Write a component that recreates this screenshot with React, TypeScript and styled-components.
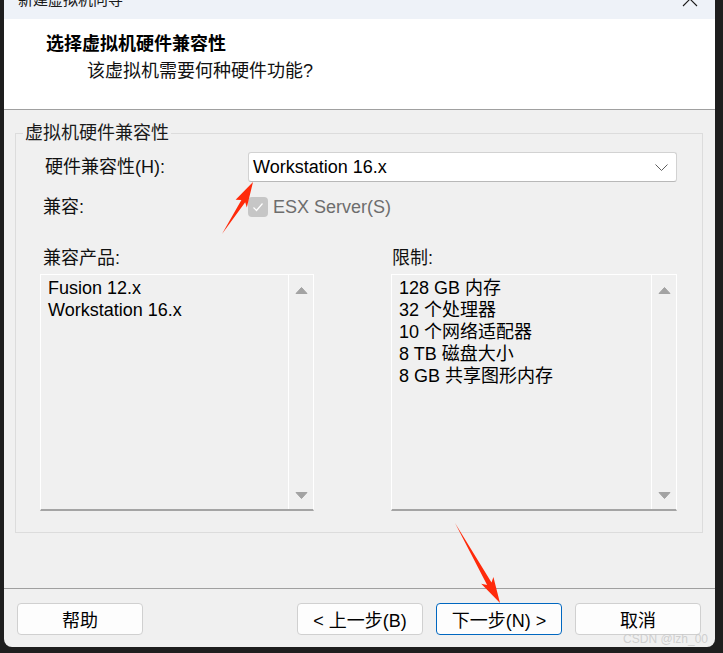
import React from 'react';
import styled, { createGlobalStyle } from 'styled-components';

const FONT = '"Liberation Sans", "Noto Sans CJK SC", sans-serif';

const GlobalStyle = createGlobalStyle`
html, body {
  margin: 0;
  padding: 0;
  background: #1e1e1e;
}
* {
  box-sizing: border-box;
}
`;

const Screen = styled.div`
position: relative;
width: 723px;
height: 653px;
padding-left: 4px;
background: #1e1e1e;
font-family: ${FONT};
overflow: hidden;
`;

const Window = styled.div`
width: 711px;
height: 647px;
display: flex;
flex-direction: column;
background: #f0f0f0;
border-radius: 0 0 8px 8px;
overflow: hidden;
`;

const TitleBar = styled.div`
height: 19px;
flex-shrink: 0;
display: flex;
align-items: flex-start;
justify-content: space-between;
padding: 0 17px 0 14px;
background: #eef2f8;
overflow: hidden;
`;

const TitleText = styled.div`
margin-top: -8px;
font-size: 15px;
line-height: 15px;
color: #1a1a1a;
`;

const CloseIcon = styled.svg`
margin-top: -9px;
flex-shrink: 0;
`;

const Header = styled.div`
height: 91px;
flex-shrink: 0;
padding: 14px 0 0 42px;
background: #ffffff;
border-bottom: 1px solid #a0a0a0;
`;

const Heading = styled.div`
font-size: 18px;
line-height: 22px;
font-weight: 700;
color: #000;
`;

const SubHeading = styled.div`
margin: 5px 0 0 41px;
font-size: 18px;
line-height: 22px;
color: #111;
`;

const Body = styled.div`
flex: 1;
padding: 12px 12px 0 11px;
`;

const GroupBox = styled.fieldset`
margin: 0;
padding: 0;
border: 1px solid #dcdcdc;
min-width: 0;
`;

const GroupLegend = styled.legend`
margin-left: 7px;
padding: 0 2px;
font-size: 18px;
line-height: 22px;
color: #1a1a1a;
`;

const GroupInner = styled.div`
padding: 8px 25px 21px 24px;
`;

const FormRow = styled.div<{ $top?: number }>`
display: grid;
grid-template-columns: 208px 1fr;
align-items: center;
height: 30px;
margin-top: ${p => p.$top ?? 0}px;
`;

const Label = styled.div<{ $indent?: number }>`
padding-left: ${p => p.$indent ?? 3}px;
font-size: 18px;
line-height: 22px;
color: #111;
`;

const Dropdown = styled.div`
height: 30px;
display: flex;
align-items: center;
justify-content: space-between;
padding: 0 8px 0 4px;
background: #ffffff;
border: 1px solid #d2d2d2;
border-bottom-color: #b8b8b8;
border-radius: 3px;
font-size: 18px;
color: #000;
`;

const CheckRow = styled.div`
display: flex;
align-items: center;
gap: 5px;
`;

const CheckBox = styled.div`
width: 20px;
height: 20px;
display: flex;
align-items: center;
justify-content: center;
background: #c6c6c6;
border-radius: 4px;
`;

const CheckText = styled.span`
font-size: 18px;
color: #6d6d6d;
`;

const ListsGrid = styled.div`
display: grid;
grid-template-columns: 274px 1fr;
column-gap: 77px;
margin-top: 25px;
`;

const ListColumn = styled.div`
display: flex;
flex-direction: column;
gap: 5px;
`;

const ListBox = styled.div`
height: 237px;
display: flex;
background: #f0f0f0;
border: 1px solid #ffffff;
border-bottom: 2px solid #a4a4a4;
`;

const ListItems = styled.div`
flex: 1;
padding: 2px 0 0 7px;
font-size: 18px;
line-height: 22px;
color: #000;
`;

const ScrollBar = styled.div`
width: 25px;
display: flex;
flex-direction: column;
align-items: center;
justify-content: space-between;
padding: 12px 0 10px;
border-left: 1px solid #ffffff;
`;

const Footer = styled.div`
height: 59px;
flex-shrink: 0;
display: flex;
align-items: flex-start;
padding: 14px 14px 0 13px;
border-top: 1px solid #a0a0a0;
`;

const ButtonGroup = styled.div`
display: flex;
gap: 13px;
margin-left: auto;
`;

const DialogButton = styled.button<{ $primary?: boolean }>`
width: 126px;
height: 32px;
padding: 0;
font-family: ${FONT};
font-size: 18px;
color: #000;
background: #fdfdfd;
border: 1px solid ${p => (p.$primary ? '#0067c0' : '#d0d0d0')};
border-radius: 4px;
`;

const Overlay = styled.svg`
position: absolute;
left: 0;
top: 0;
pointer-events: none;
`;

const Watermark = styled.div`
position: absolute;
right: 15px;
bottom: 7px;
font-family: "Liberation Sans", sans-serif;
font-size: 12px;
color: rgba(200, 200, 200, 0.85);
pointer-events: none;
`;

function Arrow({ up }: { up?: boolean }) {
  return (
    <svg width="13" height="7" viewBox="0 0 13 7">
      <polygon
        points={up ? '1,6.5 6.5,0.5 12,6.5' : '1,0.5 6.5,6.5 12,0.5'}
        fill="#a3a3a3"
        stroke="#a3a3a3"
        strokeLinejoin="round"
      />
    </svg>
  );
}

const compatible = ['Fusion 12.x', 'Workstation 16.x'];
const limits = ['128 GB 内存', '32 个处理器', '10 个网络适配器', '8 TB 磁盘大小', '8 GB 共享图形内存'];

export default function App() {
  return (
    <Screen>
      <GlobalStyle />
      <Window>
        <TitleBar>
          <TitleText>新建虚拟机向导</TitleText>
          <CloseIcon width="16" height="16" viewBox="0 0 16 16">
            <path d="M1 1 L15 15 M15 1 L1 15" stroke="#1a1a1a" strokeWidth="1.1" fill="none" />
          </CloseIcon>
        </TitleBar>
        <Header>
          <Heading>选择虚拟机硬件兼容性</Heading>
          <SubHeading>该虚拟机需要何种硬件功能?</SubHeading>
        </Header>
        <Body>
          <GroupBox>
            <GroupLegend>虚拟机硬件兼容性</GroupLegend>
            <GroupInner>
              <FormRow>
                <Label $indent={5}>硬件兼容性(H):</Label>
                <Dropdown>
                  <span>Workstation 16.x</span>
                  <svg width="13" height="7" viewBox="0 0 13 7">
                    <polyline points="0.5,0.5 6.5,6.5 12.5,0.5" fill="none" stroke="#5f5f5f" strokeWidth="1" />
                  </svg>
                </Dropdown>
              </FormRow>
              <FormRow $top={10}>
                <Label>兼容:</Label>
                <CheckRow>
                  <CheckBox>
                    <svg width="14" height="14" viewBox="0 0 14 14">
                      <polyline points="2.5,7.5 5.5,10.5 11.5,3.5" fill="none" stroke="#ffffff" strokeWidth="1.2" />
                    </svg>
                  </CheckBox>
                  <CheckText>ESX Server(S)</CheckText>
                </CheckRow>
              </FormRow>
              <ListsGrid>
                <ListColumn>
                  <Label>兼容产品:</Label>
                  <ListBox>
                    <ListItems>
                      {compatible.map(item => (
                        <div key={item}>{item}</div>
                      ))}
                    </ListItems>
                    <ScrollBar>
                      <Arrow up />
                      <Arrow />
                    </ScrollBar>
                  </ListBox>
                </ListColumn>
                <ListColumn>
                  <Label $indent={1}>限制:</Label>
                  <ListBox>
                    <ListItems>
                      {limits.map(item => (
                        <div key={item}>{item}</div>
                      ))}
                    </ListItems>
                    <ScrollBar>
                      <Arrow up />
                      <Arrow />
                    </ScrollBar>
                  </ListBox>
                </ListColumn>
              </ListsGrid>
            </GroupInner>
          </GroupBox>
        </Body>
        <Footer>
          <DialogButton>帮助</DialogButton>
          <ButtonGroup>
            <DialogButton>&lt; 上一步(B)</DialogButton>
            <DialogButton $primary>下一步(N) &gt;</DialogButton>
            <DialogButton>取消</DialogButton>
          </ButtonGroup>
        </Footer>
      </Window>
      <Overlay width="723" height="653" viewBox="0 0 723 653">
        <polygon
          points="222,234 245.2,202.2 246.8,207.6 253,182 235.6,199.8 241.4,200 "
          fill="#ff2a0a"
        />
        <polygon
          points="455,523 487.1,585.0 481.2,583.7 500,603 493.4,576.9 491.5,582.6"
          fill="#ff2a0a"
        />
      </Overlay>
      <Watermark>CSDN @lzh_00</Watermark>
    </Screen>
  );
}
